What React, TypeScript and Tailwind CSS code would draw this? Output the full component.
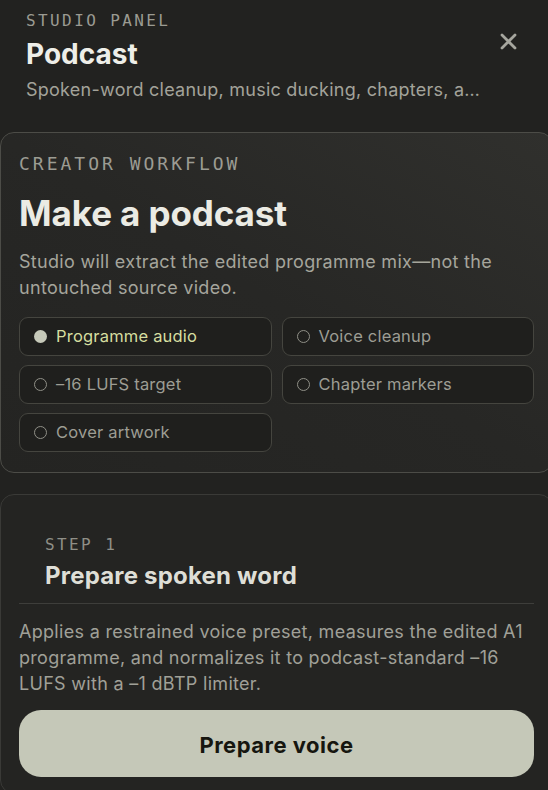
import { useState } from 'react'

const mono = "font-['DejaVu_Sans_Mono','Liberation_Mono',monospace]"

const deliverables = [
  { id: 'audio', label: 'Programme audio' },
  { id: 'cleanup', label: 'Voice cleanup' },
  { id: 'lufs', label: '–16 LUFS target' },
  { id: 'chapters', label: 'Chapter markers' },
  { id: 'cover', label: 'Cover artwork' },
]

function CloseIcon() {
  return (
    <svg width="17" height="17" viewBox="0 0 17 17" fill="none">
      <path d="M2 2L15 15M15 2L2 15" stroke="#a6a69e" strokeWidth="2.8" strokeLinecap="round" />
    </svg>
  )
}

function Chip({ label, active }: { label: string; active: boolean }) {
  return (
    <div className="flex h-[39px] items-center gap-[9px] rounded-[9px] border border-[#45453f] bg-[#1f1f1d] pl-[14px]">
      {active ? (
        <span className="h-[13px] w-[13px] rounded-full bg-[#c6c9b9]" />
      ) : (
        <span className="h-[13px] w-[13px] rounded-full border-[1.5px] border-[#8f8f87]" />
      )}
      <span className={`text-[16.5px] tracking-[0.2px] ${active ? 'text-[#d6dea0]' : 'text-[#9d9d94]'}`}>{label}</span>
    </div>
  )
}

export default function App() {
  const [selected] = useState('audio')

  return (
    <div className="h-[790px] w-[548px] overflow-hidden bg-[#222220] font-['Inter','Liberation_Sans',sans-serif] antialiased">
      {/* Panel header */}
      <header className="flex gap-[18px] pl-[26px] pr-[31px] pt-[11px]">
        <div className="min-w-0 flex-1">
          <p className={`${mono} text-[16px] leading-[20px] tracking-[2.4px] text-[#9b9b92]`}>STUDIO PANEL</p>
          <h1 className="mt-[6px] text-[28px] font-bold leading-[34px] text-[#eeeee8]">Podcast</h1>
          <p className="mt-[7px] whitespace-nowrap text-[18px] leading-[24px] tracking-[0.25px] text-[#a3a39a]">
            Spoken-word cleanup, music ducking, chapters, a…
          </p>
        </div>
        <button className="mt-[22px] h-[17px] w-[17px] shrink-0">
          <CloseIcon />
        </button>
      </header>

      {/* Creator workflow card */}
      <section className="mt-[30px] w-[553px] rounded-[14px] border border-[#4c4c47] bg-linear-to-bl from-[#30302d] via-[#272725] to-[#242422] px-[18px] pb-[20px] pt-[19px]">
        <p className={`${mono} text-[18px] leading-[24px] tracking-[3px] text-[#9c9c93]`}>CREATOR WORKFLOW</p>
        <h2 className="mt-[17px] text-[35px] font-bold leading-[40px] tracking-[-0.1px] text-[#ebebe4]">Make a podcast</h2>
        <p className="mt-[16px] text-[18px] leading-[26px] tracking-[0.3px] text-[#a5a59c]">
          Studio will extract the edited programme mix—not the untouched source video.
        </p>
        <div className="mt-[16px] grid grid-cols-2 gap-x-[10px] gap-y-[9px]">
          {deliverables.map(d => (
            <Chip key={d.id} label={d.label} active={d.id === selected} />
          ))}
        </div>
      </section>

      {/* Step card */}
      <section className="mt-[21px] w-[553px] rounded-[14px] border border-[#3a3a37] bg-[#242422] px-[18px] pt-[18px] pb-[16px]">
        <div className="border-b border-[#3e3e3b] px-[26px] pb-[12px] pt-[22px]">
          <p className={`${mono} text-[16px] leading-[20px] tracking-[2.4px] text-[#8f8f87]`}>STEP 1</p>
          <h3 className="mt-[6px] text-[24px] font-bold leading-[30px] tracking-[0.2px] text-[#deded6]">Prepare spoken word</h3>
        </div>
        <p className="mt-[15px] text-[18px] leading-[26px] tracking-[0.3px] text-[#a0a098]">
          Applies a restrained voice preset, measures the edited A1 programme, and normalizes it to podcast-standard –16 LUFS with a –1 dBTP limiter.
        </p>
        <button className="mt-[13px] h-[67px] w-full rounded-[22px] bg-[#c5c8b8] pt-[3px] text-[22px] font-bold tracking-[0.5px] text-[#16160f]">
          Prepare voice
        </button>
      </section>
    </div>
  )
}
